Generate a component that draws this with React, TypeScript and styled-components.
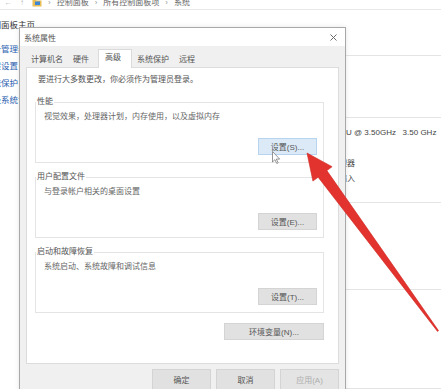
import * as React from 'react';
import styled, { createGlobalStyle } from 'styled-components';

const GlobalStyle = createGlobalStyle`
    html, body {
        margin: 0;
        padding: 0;
        background: #fff;
    }
    body {
        font-family: 'Liberation Sans', 'Noto Sans CJK SC', sans-serif;
    }
`;

const Screen = styled.div`
    position: relative;
    width: 441px;
    height: 389px;
    overflow: hidden;
    background: #fff;
    font-size: 8px;
    color: #555;
`;

/* ---- window behind the dialog ---- */
const Explorer = styled.div`
    display: flex;
    flex-direction: column;
    height: 100%;
`;
const AddressBar = styled.div`
    display: flex;
    align-items: center;
    height: 13px;
    margin-top: -4px;
    padding-left: 4px;
    border-bottom: 1px solid #e8e8e8;
    line-height: 12px;
    color: #666;
    flex-shrink: 0;
`;
const NavGlyph = styled.span<{ $gap: number }>`
    color: #b5b5b5;
    margin-right: ${p => p.$gap}px;
`;
const Crumb = styled.span<{ $left?: number }>`
    color: #999;
    margin: 0 6px 0 ${p => p.$left ?? 6}px;
`;
const Desk = styled.div`
    display: flex;
    flex: 1;
`;
const Sidebar = styled.div`
    flex: 0 0 361px;
    margin-left: -16px;
    display: flex;
    flex-direction: column;
    padding-top: 8px;
    font-size: 8.5px;
    line-height: 14px;
`;
const HomeLink = styled.div`
    color: #333;
    margin-bottom: 9px;
`;
const SideLink = styled.div`
    color: #2d62b0;
    line-height: 17px;
`;
const Main = styled.div`
    flex: 1;
    display: flex;
    flex-direction: column;
`;
const InfoSection = styled.div<{ $h?: number }>`
    box-sizing: border-box;
    height: ${p => (p.$h ? `${p.$h}px` : 'auto')};
    flex: ${p => (p.$h ? '0 0 auto' : '1')};
    border-bottom: 1px solid #e4e4e4;
    padding-top: 7px;
`;
const InfoRow = styled.div<{ $shift?: number }>`
    line-height: 15.3px;
    height: 15.3px;
    white-space: pre;
    color: #444;
    margin-left: ${p => p.$shift ?? 1}px;
`;

/* ---- dialog ---- */
const Dialog = styled.div`
    position: absolute;
    left: 19px;
    top: 27px;
    width: 327px;
    height: 380px;
    box-sizing: border-box;
    border: 1px solid #a8a8a8;
    background: #f0f0f0;
    display: flex;
    flex-direction: column;
    box-shadow: 0 0 5px rgba(0, 0, 0, 0.1);
`;
const TitleBar = styled.div`
    height: 18px;
    flex-shrink: 0;
    background: #fff;
    display: flex;
    align-items: center;
    justify-content: space-between;
    padding: 0 8px 0 4px;
    color: #555;
`;
const DialogBody = styled.div`
    flex: 1;
    display: flex;
    flex-direction: column;
    padding: 0 6px;
`;
const TabStrip = styled.div`
    height: 21px;
    flex-shrink: 0;
    display: flex;
    align-items: flex-end;
`;
const Tab = styled.div<{ $active?: boolean }>`
    box-sizing: border-box;
    height: ${p => (p.$active ? '19px' : '15px')};
    line-height: ${p => (p.$active ? '16px' : '15px')};
    padding: ${p => (p.$active ? '0 10px 0 6px' : '0 5px')};
    margin: ${p => (p.$active ? '0 0 -1px 4px' : '0')};
    background: ${p => (p.$active ? '#fff' : 'transparent')};
    border: ${p => (p.$active ? '1px solid #dadada' : 'none')};
    border-bottom: none;
    position: relative;
    z-index: ${p => (p.$active ? 1 : 0)};
    color: #555;
`;
const TabPage = styled.div`
    box-sizing: border-box;
    height: 297px;
    flex-shrink: 0;
    background: #fff;
    border: 1px solid #dcdcdc;
    padding: 6px 14px 0 8px;
    display: flex;
    flex-direction: column;
`;
const Notice = styled.div`
    line-height: 12px;
    margin-left: 3px;
    color: #555;
`;
const Group = styled.fieldset<{ $first?: boolean }>`
    margin: ${p => (p.$first ? '10px' : '8px')} 0 0;
    padding: 0 6px 7px 8px;
    border: 1px solid #e4e4e4;
    min-width: 0;
    display: flex;
    flex-direction: column;
`;
const GroupLabel = styled.legend`
    padding: 0 1px;
    margin-left: -8px;
    line-height: 12px;
    color: #555;
`;
const GroupText = styled.div`
    margin-top: 3px;
    line-height: 12px;
    color: #666;
`;
const ButtonRow = styled.div<{ $top: number }>`
    display: flex;
    justify-content: flex-end;
    margin-top: ${p => p.$top}px;
`;
const Button = styled.button<{ $w: number; $h?: number; $state?: 'hot' | 'off' }>`
    box-sizing: border-box;
    width: ${p => p.$w}px;
    height: ${p => p.$h ?? 17}px;
    padding: 0;
    font-family: inherit;
    font-size: 8px;
    color: ${p => (p.$state === 'off' ? '#adadad' : '#555')};
    background: ${p => (p.$state === 'hot' ? '#dceaf8' : p.$state === 'off' ? '#e4e4e4' : '#e1e1e1')};
    border: 1px solid ${p => (p.$state === 'hot' ? '#b6d3f0' : '#d4d4d4')};
    border-radius: 0;
`;
const Footer = styled.div`
    display: flex;
    justify-content: flex-end;
    gap: 5px;
    padding-top: 5px;
`;
const Overlay = styled.svg`
    position: absolute;
    left: 0;
    top: 0;
    pointer-events: none;
`;

const FolderIcon = () => (
    <svg width="10" height="9" viewBox="0 0 10 9">
        <path d="M0.5 1.5h3l1 1h5v6h-9z" fill="#e9be55" />
        <rect x="3" y="3.5" width="5" height="3.5" fill="#3f86d4" />
    </svg>
);

const CloseIcon = () => (
    <svg width="7" height="7" viewBox="0 0 7 7">
        <path d="M0.5 0.5l6 6M6.5 0.5l-6 6" stroke="#6b6b6b" strokeWidth="1" />
    </svg>
);

const App = () => {
    return (
        <Screen>
            <GlobalStyle />
            <Explorer>
                <AddressBar>
                    <NavGlyph $gap={8}>←</NavGlyph>
                    <NavGlyph $gap={8}>↑</NavGlyph>
                    <FolderIcon />
                    <Crumb>›</Crumb>
                    <span>控制面板</span>
                    <Crumb>›</Crumb>
                    <span>所有控制面板项</span>
                    <Crumb>›</Crumb>
                    <span>系统</span>
                </AddressBar>
                <Desk>
                    <Sidebar>
                        <HomeLink>控制面板主页</HomeLink>
                        <SideLink>设备管理器</SideLink>
                        <SideLink>远程设置</SideLink>
                        <SideLink>系统保护</SideLink>
                        <SideLink>高级系统设置</SideLink>
                    </Sidebar>
                    <Main>
                        <InfoSection $h={46} />
                        <InfoSection $h={62} />
                        <InfoSection $h={85}>
                            <InfoRow>U @ 3.50GHz   3.50 GHz</InfoRow>
                            <InfoRow />
                            <InfoRow $shift={-14}>处理器</InfoRow>
                            <InfoRow $shift={-6}>输入</InfoRow>
                        </InfoSection>
                        <InfoSection $h={87} />
                        <InfoSection />
                    </Main>
                </Desk>
            </Explorer>

            <Dialog>
                <TitleBar>
                    <span>系统属性</span>
                    <CloseIcon />
                </TitleBar>
                <DialogBody>
                    <TabStrip>
                        <Tab>计算机名</Tab>
                        <Tab>硬件</Tab>
                        <Tab $active>高级</Tab>
                        <Tab>系统保护</Tab>
                        <Tab>远程</Tab>
                    </TabStrip>
                    <TabPage>
                        <Notice>要进行大多数更改，你必须作为管理员登录。</Notice>
                        <Group $first>
                            <GroupLabel>性能</GroupLabel>
                            <GroupText>视觉效果，处理器计划，内存使用，以及虚拟内存</GroupText>
                            <ButtonRow $top={15}>
                                <Button $w={59} $state="hot">设置(S)...</Button>
                            </ButtonRow>
                        </Group>
                        <Group>
                            <GroupLabel>用户配置文件</GroupLabel>
                            <GroupText>与登录帐户相关的桌面设置</GroupText>
                            <ButtonRow $top={15}>
                                <Button $w={59}>设置(E)...</Button>
                            </ButtonRow>
                        </Group>
                        <Group>
                            <GroupLabel>启动和故障恢复</GroupLabel>
                            <GroupText>系统启动、系统故障和调试信息</GroupText>
                            <ButtonRow $top={15}>
                                <Button $w={59}>设置(T)...</Button>
                            </ButtonRow>
                        </Group>
                        <ButtonRow $top={10}>
                            <Button $w={100}>环境变量(N)...</Button>
                        </ButtonRow>
                    </TabPage>
                    <Footer>
                        <Button $w={59} $h={21}>确定</Button>
                        <Button $w={59} $h={21}>取消</Button>
                        <Button $w={59} $h={21} $state="off">应用(A)</Button>
                    </Footer>
                </DialogBody>
            </Dialog>

            <Overlay width="441" height="389" viewBox="0 0 441 389">
                <path
                    d="M272.5 151.5v10.5l2.4-2.3 1.9 3.8 1.4-0.7-1.9-3.7h3.4z"
                    fill="#fff"
                    stroke="#6a6a6a"
                    strokeWidth="0.7"
                    strokeLinejoin="round"
                />
                <polygon
                    points="307,153 332.1,166.7 326.9,170.6 438.5,330.6 437.5,331.4 318.1,177.2 312.9,181.1"
                    fill="#e2332e"
                    stroke="#d02823"
                    strokeWidth="0.6"
                    strokeLinejoin="round"
                />
            </Overlay>
        </Screen>
    );
};

export default App;
